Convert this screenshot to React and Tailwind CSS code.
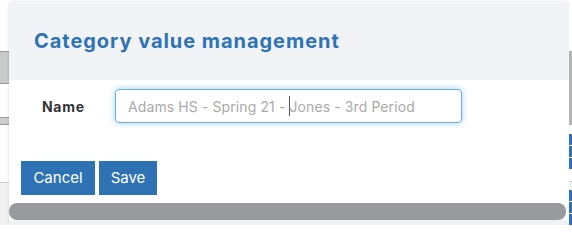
export default function App() {
  const font = { fontFamily: 'Inter, "Open Sans", sans-serif' };
  return (
    <div className="flex h-[225px] w-[572px] overflow-hidden bg-white" style={font}>
      {/* left background strip */}
      <div className="flex w-[9px] shrink-0 flex-col">
        <div className="h-[51px] bg-white" />
        <div className="h-[33px] border-y border-[#9a9a9a] bg-[#c9c9c9]" />
        <div className="h-[33px] bg-white" />
        <div className="h-[8px] border-y border-[#9a9a9a] bg-[#cfcfcf]" />
        <div className="h-[57px] bg-white" />
        <div className="flex-1 border-t border-[#cfcfcf] bg-[#f2f2f2]" />
      </div>

      {/* modal */}
      <div className="mt-[2px] flex w-[560px] shrink-0 flex-col rounded-t-[3px] bg-white shadow-[0_0_3px_rgba(0,0,0,0.15)]">
        <div className="flex h-[78px] items-center bg-[#f1f3f7] pl-[25px]">
          <h2 className="text-[20px] font-bold tracking-[0.95px] text-[#2f73b5]">Category value management</h2>
        </div>
        <div className="flex h-[44px] items-center pt-[9px] pb-px">
          <label className="ml-[33px] w-[73px] text-[14px] font-bold tracking-[0.7px] text-[#333]">Name</label>
          <div className="relative flex h-[34px] w-[347px] items-center whitespace-pre rounded-[4px] border border-[#66afe9] pl-[12px] text-[14px] tracking-[0.1px] text-[#aaaaaa] shadow-[0_0_6px_rgba(102,175,233,0.6)]">
            <span>Adams HS - Spring 21 - </span>
            <span className="mr-[-1px] h-[20px] w-px bg-[#555]" />
            <span>Jones - 3rd Period</span>
          </div>
        </div>
        <div className="flex gap-[4px] pt-[37px] pl-[12px]">
          <button className="h-[34px] w-[74px] bg-[#2e72b3] text-[15px] text-white">Cancel</button>
          <button className="h-[34px] w-[58px] bg-[#2e72b3] text-[15px] text-white">Save</button>
        </div>
        <div className="mt-[8px] h-[17px] w-[557px] rounded-[8px] bg-[#979b9e]" />
        <div className="flex-1 bg-[#f1f2f4]" />
      </div>

      {/* right background strip */}
      <div className="flex w-[3px] shrink-0 flex-col">
        <div className="h-[51px] bg-white" />
        <div className="h-[74px] bg-[#b4b4b4]" />
        <div className="h-[9px] bg-white" />
        <div className="h-[11px] bg-[#2e72b3]" />
        <div className="h-px bg-white" />
        <div className="h-[11px] bg-[#2e72b3]" />
        <div className="h-px bg-white" />
        <div className="h-[11px] bg-[#2e72b3]" />
        <div className="h-[12px] bg-white" />
        <div className="h-px bg-[#cfcfcf]" />
        <div className="h-[8px] bg-[#f2f2f2]" />
        <div className="h-[11px] bg-[#2e72b3]" />
        <div className="h-px bg-white" />
        <div className="h-[11px] bg-[#2e72b3]" />
        <div className="h-px bg-white" />
        <div className="flex-1 bg-[#2e72b3]" />
      </div>
    </div>
  );
}
